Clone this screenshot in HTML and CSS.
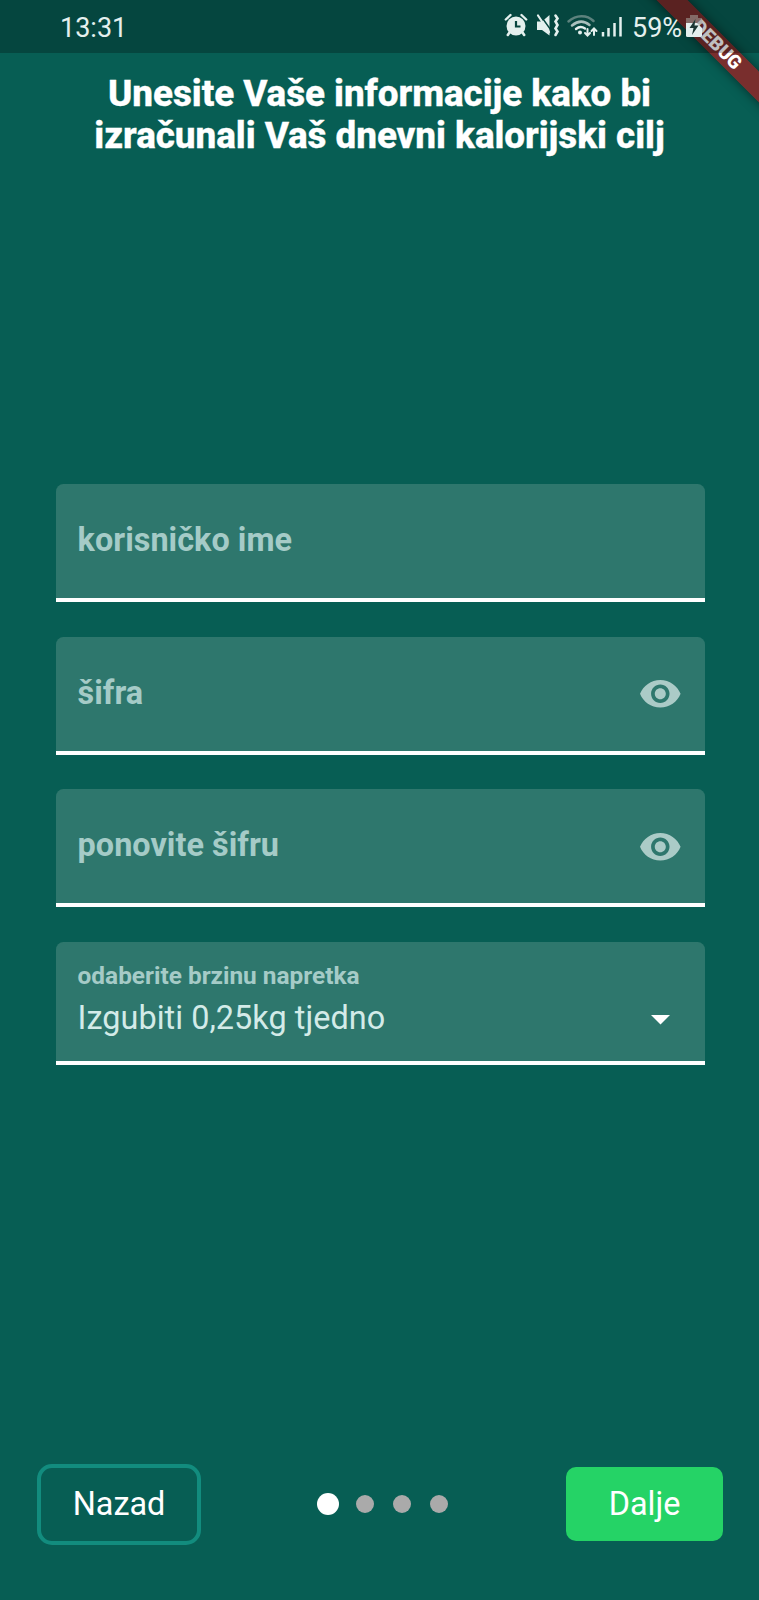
FILE: index.html
```html
<!DOCTYPE html>
<html lang="hr">
<head>
<meta charset="utf-8">
<title>Registracija</title>
<link rel="stylesheet" href="styles.css">
</head>
<body>
<div class="screen">
  <div class="banner"><span class="banner-text">DEBUG</span></div>
  <header class="status">
    <span class="clock">13:31</span>
    <div class="status-icons">
      <svg class="sys-icons" width="128" height="30" viewBox="0 0 128 30" fill="none" stroke="#e4f0ee" stroke-linecap="round">
        <circle cx="12" cy="16" r="9.500" fill="#e4f0ee" stroke="none"/>
        <path d="M1.800 9.500 6.500 5M22.200 9.500 17.500 5" stroke-width="2.400"/>
        <path d="M5.500 22.500 3.800 25M18.500 22.500 20.200 25" stroke-width="2.600"/>
        <path d="M12 11v5.500h4.500" stroke="#07463f" stroke-width="2.200" stroke-linecap="butt"/>
        <path d="M33 11.500h5l7.500-6.500v20.500L38 20h-5z" fill="#e4f0ee" stroke="none"/>
        <path d="M36.500 5.500 46.500 19.500" stroke="#07463f" stroke-width="1.400"/>
        <path d="M34 5.500 45 22" stroke-width="2.200"/>
        <path d="m51.500 5.500 2 3-2 3 2 3.500-2 3.500 2 3-2 3.500" stroke-width="2.600"/>
        <path d="M64.500 11.500C72 4.500 83 4.500 89.500 11" stroke="#5c827d" stroke-width="2.500"/>
        <path d="M68 15.500C74 10.500 80 10.500 85.500 15" stroke="#a9c0bd" stroke-width="2.500"/>
        <path d="M72 19c3-2.500 6-2.500 9-.5" stroke-width="2.400"/>
        <circle cx="76" cy="22.500" r="2" fill="#e4f0ee" stroke="none"/>
        <path d="M83.500 19v6M81 23l2.500 2.500L86 23M90 25v-6M87.500 21l2.500-2.500 2.500 2.500" stroke-width="2"/>
        <path d="M99 22v4.500M104.500 18v8.500M110.500 13v13.500M116.500 7v19.500" stroke-width="2.500" stroke-linecap="butt"/>
      </svg>
      <span class="percent">59%</span>
      <svg class="battery" width="16" height="23" viewBox="0 0 16 23">
        <path d="M4 1h8v3h4v6H0V4h4z" fill="#a5a5a0" opacity=".55"/>
        <path d="M0 9h11l5 5v7.500a1.500 1.500 0 0 1-1.500 1.500h-13A1.500 1.500 0 0 1 0 21.500z" fill="#e4f0ee"/>
        <path d="M9.500 5 3.500 14h4l-1.500 7 6.500-9.500h-4z" fill="#1b3733"/>
      </svg>
    </div>
  </header>
  <h1 class="title">Unesite Vaše informacije kako bi<br>izračunali Vaš dnevni kalorijski cilj</h1>
  <main class="form">
    <div class="field"><span class="label">korisničko ime</span></div>
    <div class="field"><span class="label">šifra</span>
      <svg class="eye" viewBox="1 4 22 16"><path d="M12 4.500C7 4.500 2.730 7.610 1 12c1.730 4.390 6 7.500 11 7.500s9.270-3.110 11-7.500c-1.730-4.390-6-7.500-11-7.500zM12 17c-2.760 0-5-2.240-5-5s2.240-5 5-5 5 2.240 5 5-2.240 5-5 5zm0-8c-1.660 0-3 1.340-3 3s1.340 3 3 3 3-1.340 3-3-1.340-3-3-3z"/></svg></div>
    <div class="field"><span class="label">ponovite šifru</span>
      <svg class="eye" viewBox="1 4 22 16"><path d="M12 4.500C7 4.500 2.730 7.610 1 12c1.730 4.390 6 7.500 11 7.500s9.270-3.110 11-7.500c-1.730-4.390-6-7.500-11-7.500zM12 17c-2.760 0-5-2.240-5-5s2.240-5 5-5 5 2.240 5 5-2.240 5-5 5zm0-8c-1.660 0-3 1.340-3 3s1.340 3 3 3 3-1.340 3-3-1.340-3-3-3z"/></svg></div>
    <div class="field select">
      <div class="select-text"><span class="small-label">odaberite brzinu napretka</span><span class="value">Izgubiti 0,25kg tjedno</span></div>
      <svg class="arrow" viewBox="0 0 19 10"><path d="M0 0h19L9.500 9.500z"/></svg>
    </div>
  </main>
  <footer class="nav">
    <button class="btn back">Nazad</button>
    <div class="dots"><i class="dot on"></i><i class="dot"></i><i class="dot"></i><i class="dot"></i></div>
    <button class="btn next">Dalje</button>
  </footer>
</div>
</body>
</html>
```
FILE: styles.css
```css
* { box-sizing: border-box; }
body { margin: 0; font-family: Roboto, sans-serif; background: #075e54; }
.screen { position: relative; width: 759px; height: 1600px; overflow: hidden; display: flex; flex-direction: column; }
.banner {
  position: absolute; left: 621.500px; top: 34px; width: 190px; height: 22px;
  background: rgba(176, 24, 26, .68); box-shadow: 0 0 11px rgba(0, 0, 0, .5);
  transform: rotate(45deg); text-align: center;
}
.banner-text { display: block; font-size: 19px; line-height: 22px; font-weight: 900; color: #fff; }
.status {
  position: relative; height: 53px; flex: none; padding: 0 57px 0 60px; background: rgba(0, 0, 0, .25);
  display: flex; justify-content: space-between; color: #e4f0ee; font-size: 27px;
}
.clock { line-height: 56px; }
.status-icons { display: flex; align-items: flex-start; }
.sys-icons { margin-top: 10px; }
.percent { line-height: 56px; width: 54px; }
.battery { margin-top: 14px; }
.title { margin: 20px 0 0; text-align: center; color: #fff; font-size: 36.900px; line-height: 42px; font-weight: 800; letter-spacing: -.08px; -webkit-text-stroke: .3px #fff; white-space: nowrap; }
.form { margin-top: 327px; padding: 0 54.500px 0 55.600px; display: flex; flex-direction: column; gap: 34.500px; }
.field {
  height: 118px; background: #2e776d; border-bottom: 4px solid #fff; border-radius: 7.500px 7.500px 0 0;
  padding: 0 23.500px 0 22px; display: flex; align-items: center; justify-content: space-between;
}
.label { color: #a5cbc7; font-weight: 700; font-size: 32.400px; line-height: 40px; margin-top: -1.500px; letter-spacing: .03px; }
.eye { width: 40.600px; height: 29.500px; fill: #abcbc7; margin-top: 1px; }
.select { height: 123.500px; align-items: flex-start; padding-right: 35px; }
.select-text { display: flex; flex-direction: column; padding-top: 19px; }
.small-label { color: #a5cbc7; font-weight: 700; font-size: 24.400px; line-height: 30px; }
.value { color: #d3ebe8; font-size: 32.400px; line-height: 40px; margin-top: 7px; letter-spacing: .04px; }
.arrow { width: 19px; height: 10px; fill: #fff; margin-top: 73px; }
.nav { margin-top: 398.500px; padding: 0 36px 0 37px; height: 81px; display: flex; align-items: center; justify-content: space-between; }
.btn { font-family: inherit; font-size: 32.400px; color: #fff; border: 0; padding: 0; }
.back { width: 164px; height: 81px; border: 4px solid #128c7e; border-radius: 15px; background: none; }
.next { width: 157px; height: 74px; background: #25d366; border-radius: 10px; }
.dots { display: flex; align-items: center; gap: 18.500px; margin-right: 2px; }
.dot { width: 18.500px; height: 18.500px; border-radius: 50%; background: #aaa; }
.on { width: 22px; height: 22px; background: #fff; margin-right: -2px; }
```
